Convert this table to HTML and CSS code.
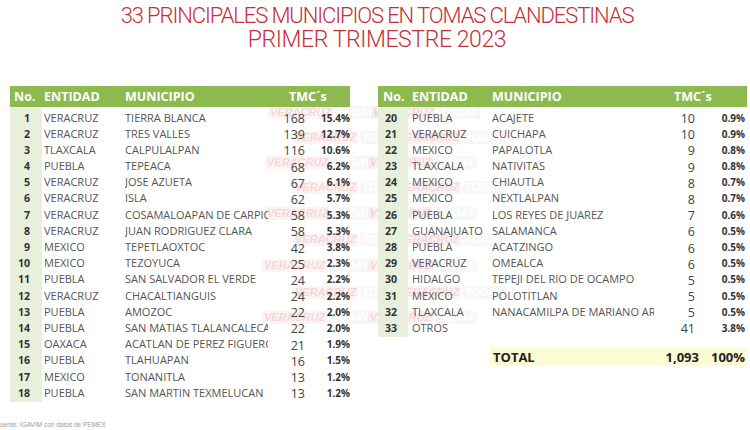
FILE: index.html
```html
<!DOCTYPE html>
<html lang="es">
<head>
<meta charset="utf-8">
<title>33 principales municipios en tomas clandestinas</title>
<link rel="stylesheet" href="styles.css">
</head>
<body>
<div class="page">
  <header class="title">
    <h1>33 PRINCIPALES MUNICIPIOS EN TOMAS CLANDESTINAS</h1>
    <h2>PRIMER TRIMESTRE 2023</h2>
  </header>

  <main class="tables">
    <section class="tbl tbl-l">
      <div class="row head"><span class="no">No.</span><span class="ent">ENTIDAD</span><span class="mun">MUNICIPIO</span><span class="tmc">TMC´s</span></div>
      <div class="row"><span class="no">1</span><span class="ent">VERACRUZ</span><span class="mun">TIERRA BLANCA</span><span class="num">168</span><span class="pct">15.4%</span></div>
      <div class="row"><span class="no">2</span><span class="ent">VERACRUZ</span><span class="mun">TRES VALLES</span><span class="num">139</span><span class="pct">12.7%</span></div>
      <div class="row"><span class="no">3</span><span class="ent">TLAXCALA</span><span class="mun">CALPULALPAN</span><span class="num">116</span><span class="pct">10.6%</span></div>
      <div class="row"><span class="no">4</span><span class="ent">PUEBLA</span><span class="mun">TEPEACA</span><span class="num">68</span><span class="pct">6.2%</span></div>
      <div class="row"><span class="no">5</span><span class="ent">VERACRUZ</span><span class="mun">JOSE AZUETA</span><span class="num">67</span><span class="pct">6.1%</span></div>
      <div class="row"><span class="no">6</span><span class="ent">VERACRUZ</span><span class="mun">ISLA</span><span class="num">62</span><span class="pct">5.7%</span></div>
      <div class="row"><span class="no">7</span><span class="ent">VERACRUZ</span><span class="mun">COSAMALOAPAN DE CARPIO</span><span class="num">58</span><span class="pct">5.3%</span></div>
      <div class="row"><span class="no">8</span><span class="ent">VERACRUZ</span><span class="mun">JUAN RODRIGUEZ CLARA</span><span class="num">58</span><span class="pct">5.3%</span></div>
      <div class="row"><span class="no">9</span><span class="ent">MEXICO</span><span class="mun">TEPETLAOXTOC</span><span class="num">42</span><span class="pct">3.8%</span></div>
      <div class="row"><span class="no">10</span><span class="ent">MEXICO</span><span class="mun">TEZOYUCA</span><span class="num">25</span><span class="pct">2.3%</span></div>
      <div class="row"><span class="no">11</span><span class="ent">PUEBLA</span><span class="mun">SAN SALVADOR EL VERDE</span><span class="num">24</span><span class="pct">2.2%</span></div>
      <div class="row"><span class="no">12</span><span class="ent">VERACRUZ</span><span class="mun">CHACALTIANGUIS</span><span class="num">24</span><span class="pct">2.2%</span></div>
      <div class="row"><span class="no">13</span><span class="ent">PUEBLA</span><span class="mun">AMOZOC</span><span class="num">22</span><span class="pct">2.0%</span></div>
      <div class="row"><span class="no">14</span><span class="ent">PUEBLA</span><span class="mun">SAN MATIAS TLALANCALECA</span><span class="num">22</span><span class="pct">2.0%</span></div>
      <div class="row"><span class="no">15</span><span class="ent">OAXACA</span><span class="mun">ACATLAN DE PEREZ FIGUEROA</span><span class="num">21</span><span class="pct">1.9%</span></div>
      <div class="row"><span class="no">16</span><span class="ent">PUEBLA</span><span class="mun">TLAHUAPAN</span><span class="num">16</span><span class="pct">1.5%</span></div>
      <div class="row"><span class="no">17</span><span class="ent">MEXICO</span><span class="mun">TONANITLA</span><span class="num">13</span><span class="pct">1.2%</span></div>
      <div class="row"><span class="no">18</span><span class="ent">PUEBLA</span><span class="mun">SAN MARTIN TEXMELUCAN</span><span class="num">13</span><span class="pct">1.2%</span></div>
    </section>

    <section class="tbl tbl-r">
      <div class="row head"><span class="no">No.</span><span class="ent">ENTIDAD</span><span class="mun">MUNICIPIO</span><span class="tmc">TMC´s</span></div>
      <div class="row"><span class="no">20</span><span class="ent">PUEBLA</span><span class="mun">ACAJETE</span><span class="num">10</span><span class="pct">0.9%</span></div>
      <div class="row"><span class="no">21</span><span class="ent">VERACRUZ</span><span class="mun">CUICHAPA</span><span class="num">10</span><span class="pct">0.9%</span></div>
      <div class="row"><span class="no">22</span><span class="ent">MEXICO</span><span class="mun">PAPALOTLA</span><span class="num">9</span><span class="pct">0.8%</span></div>
      <div class="row"><span class="no">23</span><span class="ent">TLAXCALA</span><span class="mun">NATIVITAS</span><span class="num">9</span><span class="pct">0.8%</span></div>
      <div class="row"><span class="no">24</span><span class="ent">MEXICO</span><span class="mun">CHIAUTLA</span><span class="num">8</span><span class="pct">0.7%</span></div>
      <div class="row"><span class="no">25</span><span class="ent">MEXICO</span><span class="mun">NEXTLALPAN</span><span class="num">8</span><span class="pct">0.7%</span></div>
      <div class="row"><span class="no">26</span><span class="ent">PUEBLA</span><span class="mun">LOS REYES DE JUAREZ</span><span class="num">7</span><span class="pct">0.6%</span></div>
      <div class="row"><span class="no">27</span><span class="ent">GUANAJUATO</span><span class="mun">SALAMANCA</span><span class="num">6</span><span class="pct">0.5%</span></div>
      <div class="row"><span class="no">28</span><span class="ent">PUEBLA</span><span class="mun">ACATZINGO</span><span class="num">6</span><span class="pct">0.5%</span></div>
      <div class="row"><span class="no">29</span><span class="ent">VERACRUZ</span><span class="mun">OMEALCA</span><span class="num">6</span><span class="pct">0.5%</span></div>
      <div class="row"><span class="no">30</span><span class="ent">HIDALGO</span><span class="mun">TEPEJI DEL RIO DE OCAMPO</span><span class="num">5</span><span class="pct">0.5%</span></div>
      <div class="row"><span class="no">31</span><span class="ent">MEXICO</span><span class="mun">POLOTITLAN</span><span class="num">5</span><span class="pct">0.5%</span></div>
      <div class="row"><span class="no">32</span><span class="ent">TLAXCALA</span><span class="mun">NANACAMILPA DE MARIANO ARISTA</span><span class="num">5</span><span class="pct">0.5%</span></div>
      <div class="row"><span class="no">33</span><span class="ent">OTROS</span><span class="mun"></span><span class="num">41</span><span class="pct">3.8%</span></div>
      <div class="total"><span class="t-label">TOTAL</span><span class="t-num">1,093</span><span class="t-pct">100%</span></div>
    </section>
  </main>

  <footer class="source"><span class="cut">F</span>uente: IGAVIM con datos de PEMEX</footer>

  <div class="wm-layer" aria-hidden="true">
    <span class="wm" style="left:268px;top:106px"><b>VERACRUZ</b><i>TODAY</i></span>
    <span class="wm" style="left:371px;top:106px"><b>VERACRUZ</b><i>TODAY</i></span>
    <span class="wm" style="left:293px;top:131px"><b>VERACRUZ</b><i>TODAY</i></span>
    <span class="wm" style="left:396px;top:131px"><b>VERACRUZ</b><i>TODAY</i></span>
    <span class="wm" style="left:265px;top:156px"><b>VERACRUZ</b><i>TODAY</i></span>
    <span class="wm" style="left:368px;top:156px"><b>VERACRUZ</b><i>TODAY</i></span>
    <span class="wm" style="left:293px;top:181px"><b>VERACRUZ</b><i>TODAY</i></span>
    <span class="wm" style="left:396px;top:181px"><b>VERACRUZ</b><i>TODAY</i></span>
    <span class="wm" style="left:265px;top:207px"><b>VERACRUZ</b><i>TODAY</i></span>
    <span class="wm" style="left:368px;top:207px"><b>VERACRUZ</b><i>TODAY</i></span>
    <span class="wm" style="left:293px;top:233px"><b>VERACRUZ</b><i>TODAY</i></span>
    <span class="wm" style="left:396px;top:233px"><b>VERACRUZ</b><i>TODAY</i></span>
    <span class="wm" style="left:262px;top:259px"><b>VERACRUZ</b><i>TODAY</i></span>
    <span class="wm" style="left:368px;top:259px"><b>VERACRUZ</b><i>TODAY</i></span>
    <span class="wm" style="left:293px;top:286px"><b>VERACRUZ</b><i>TODAY</i></span>
    <span class="wm" style="left:396px;top:286px"><b>VERACRUZ</b><i>TODAY</i></span>
    <span class="wm" style="left:262px;top:311px"><b>VERACRUZ</b><i>TODAY</i></span>
    <span class="wm" style="left:368px;top:311px"><b>VERACRUZ</b><i>TODAY</i></span>
  </div>
</div>
</body>
</html>
```

FILE: styles.css
```css
* { box-sizing: border-box; }

html, body {
  margin: 0;
  padding: 0;
  background: #ffffff;
}

body {
  width: 750px;
  height: 430px;
  overflow: hidden;
  font-family: "Open Sans", "DejaVu Sans", sans-serif;
  color: #555;
}

.page {
  position: relative;
  width: 750px;
  height: 430px;
  display: flex;
  flex-direction: column;
}

.title {
  text-align: center;
  color: #c3303a;
  padding-top: 3px;
  padding-left: 4px;
}

.title h1,
.title h2 {
  margin: 0;
  font-family: Roboto, "Liberation Sans", sans-serif;
  font-weight: 300;
  font-size: 22px;
  line-height: 25px;
  letter-spacing: -1.1px;
}

.title h2 {
  font-size: 23px;
  line-height: 23px;
  letter-spacing: -0.4px;
}

.tables {
  display: flex;
  align-items: flex-start;
  gap: 28px;
  margin-top: 35px;
  padding-left: 10px;
}

.tbl {
  display: flex;
  flex-direction: column;
  position: relative;
  z-index: 1;
}

.tbl-l { width: 340px; }
.tbl-r { width: 369px; }

.row {
  display: grid;
  height: 16.2px;
  align-items: center;
  font-size: 11px;
  line-height: 16px;
  white-space: nowrap;
}

.tbl-l .row { grid-template-columns: 32px 83px 143px 37px 45px; }
.tbl-r .row { grid-template-columns: 30px 84px 162px 41px 52px; }

.row > span { overflow: hidden; }

.row .no {
  align-self: stretch;
  display: flex;
  align-items: center;
  justify-content: flex-end;
  background: #e8f0dc;
  padding-right: 12px;
  font-weight: 700;
  font-size: 10.6px;
  color: #333;
}

.tbl-r .row .no { padding-right: 11px; }

.row .ent { padding-left: 2px; }
.tbl-r .row .ent { padding-left: 4px; }

.row .num {
  text-align: right;
  font-size: 12.5px;
  color: #444;
  padding-top: 3px;
  overflow: visible;
}

.row .pct {
  text-align: right;
  font-weight: 700;
  font-size: 10px;
  color: #333;
}

.tbl-r .row .pct { padding-right: 2px; }

.row.head {
  height: 21px;
  background: #8cba4e;
  color: #ffffff;
  font-weight: 700;
  font-size: 12.5px;
  margin-bottom: 1px;
}

.row.head .no {
  background: transparent;
  justify-content: flex-start;
  padding-left: 4px;
  padding-right: 0;
  font-size: 12.5px;
  color: #ffffff;
}

.tbl-r .row.head .no { padding-left: 5px; }

.row.head .tmc {
  grid-column: span 2;
  padding-left: 21px;
}

.tbl-r .row.head .tmc { padding-left: 20px; }

.total {
  display: grid;
  grid-template-columns: 1fr 39px 48px;
  align-items: center;
  margin-top: 13px;
  margin-left: 112px;
  height: 17px;
  background: #fdfbd3;
  font-weight: 700;
  font-size: 13px;
  color: #222;
}

.t-label { padding-left: 3px; }
.t-num, .t-pct { text-align: right; }
.t-pct { padding-right: 2px; }

.source {
  margin-top: auto;
  padding-bottom: 2px;
  font-family: "Liberation Sans", Arial, sans-serif;
  font-size: 6.5px;
  color: #9a9a9a;
  white-space: nowrap;
}

.source .cut { margin-left: -4px; }

.wm-layer {
  position: absolute;
  inset: 0;
  z-index: 0;
  pointer-events: none;
}

.wm {
  position: absolute;
  display: flex;
  gap: 2px;
  font-family: "Liberation Sans", Arial, sans-serif;
  font-size: 11px;
  font-weight: 700;
  font-style: italic;
  line-height: 13px;
  opacity: 0.2;
}

.wm b {
  background: #f3c8c8;
  color: #d33c3c;
  padding: 0 2px;
  border-radius: 2px;
}

.wm i {
  background: #d9d9dd;
  color: #ffffff;
  padding: 0 2px;
  border-radius: 2px;
}
```
